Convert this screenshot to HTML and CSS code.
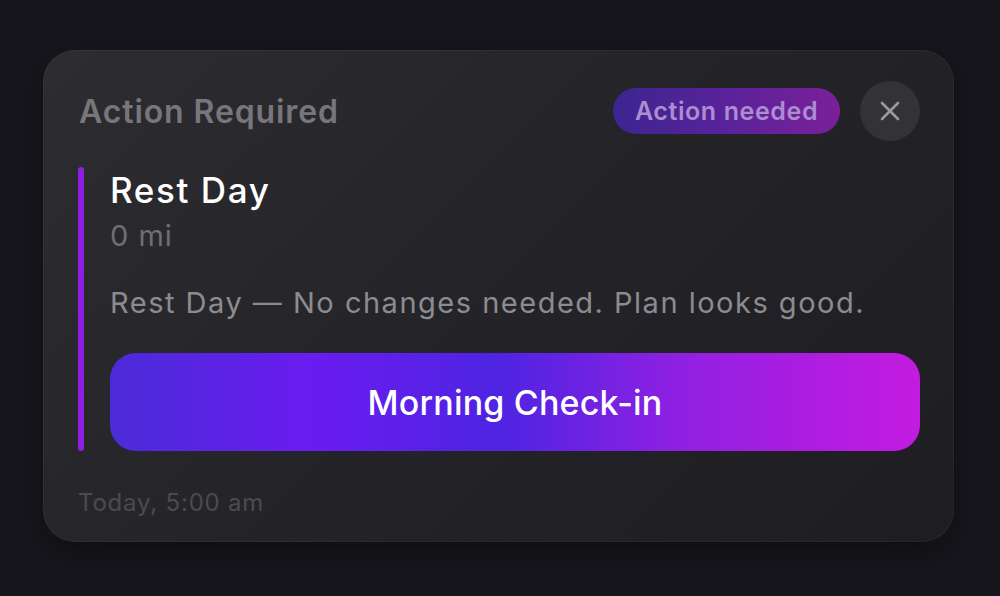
FILE: index.html
```html
<!DOCTYPE html>
<html>
<head>
<meta charset="utf-8">
<link rel="stylesheet" href="styles.css">
</head>
<body>
<div class="page">
  <div class="card">
    <div class="header">
      <div class="title">Action Required</div>
      <div class="header-right">
        <span class="badge">Action needed</span>
        <button class="close" aria-label="Close">
          <svg width="22" height="22" viewBox="0 0 22 22"><path d="M3 3 L19 19 M19 3 L3 19" stroke="#9a9a9e" stroke-width="2.6" stroke-linecap="round" fill="none"/></svg>
        </button>
      </div>
    </div>
    <div class="body">
      <div class="accent"></div>
      <div class="content">
        <div class="name">Rest Day</div>
        <div class="dist">0 mi</div>
        <div class="desc">Rest Day — No changes needed. Plan looks good.</div>
        <button class="cta">Morning Check-in</button>
      </div>
    </div>
    <div class="footer">Today, 5:00 am</div>
  </div>
</div>
</body>
</html>
```

FILE: styles.css
```css
* { box-sizing: border-box; }
html, body { margin: 0; padding: 0; }
body {
  background: #16161c;
  font-family: Inter, "Noto Sans", sans-serif;
  width: 1000px;
  height: 596px;
  overflow: hidden;
}
.page {
  padding: 50px 46px 0 43px;
}
.card {
  width: 911px;
  height: 492px;
  border-radius: 32px;
  background: linear-gradient(135deg, #2d2d31 0%, #242428 50%, #1e1e22 100%);
  box-shadow: inset 0 0 0 1px rgba(255,255,255,0.04), 0 10px 30px rgba(0,0,0,0.35);
  padding: 31px 34px 0 35px;
  display: flex;
  flex-direction: column;
}
.header {
  display: flex;
  align-items: center;
  justify-content: space-between;
  height: 60px;
}
.title {
  font-size: 32px;
  font-weight: 600;
  color: #77777b;
  letter-spacing: 0.9px;
  margin-left: 1px;
}
.header-right {
  display: flex;
  align-items: center;
  gap: 20px;
}
.badge {
  width: 227px;
  height: 46px;
  border-radius: 23px;
  background: linear-gradient(90deg, #3b2590 0%, #5a229a 50%, #7a2098 100%);
  color: #ac8dd0;
  font-size: 25px;
  font-weight: 600;
  letter-spacing: 0.6px;
  display: flex;
  align-items: center;
  justify-content: center;
}
.close {
  width: 60px;
  height: 60px;
  border-radius: 50%;
  background: #333337;
  border: none;
  padding: 0;
  display: flex;
  align-items: center;
  justify-content: center;
}
.body {
  display: flex;
  margin-top: 26px;
  gap: 26px;
}
.accent {
  width: 6px;
  border-radius: 3px;
  background: #8e1ee2;
}
.content {
  flex: 1;
  display: flex;
  flex-direction: column;
}
.name {
  font-size: 35px;
  font-weight: 500;
  color: #ffffff;
  line-height: 47px;
  letter-spacing: 1.6px;
}
.dist {
  font-size: 29px;
  color: #6f6f73;
  line-height: 36px;
  margin-top: 4px;
  letter-spacing: 1px;
}
.desc {
  font-size: 29px;
  color: #8c8c90;
  line-height: 36px;
  margin-top: 31px;
  letter-spacing: 1.5px;
}
.cta {
  margin-top: 32px;
  height: 98px;
  border: none;
  border-radius: 26px;
  background: linear-gradient(90deg, #4b2bd8 0%, #6a1cf0 25%, #4e24e2 48%, #8f20e2 70%, #c41be0 100%);
  color: #ffffff;
  font-family: Inter, sans-serif;
  font-size: 34px;
  font-weight: 500;
  letter-spacing: 0.2px;
}
.footer {
  margin-top: 37px;
  font-size: 24px;
  line-height: 30px;
  color: #4b4b4f;
  letter-spacing: 0.8px;
}
```
